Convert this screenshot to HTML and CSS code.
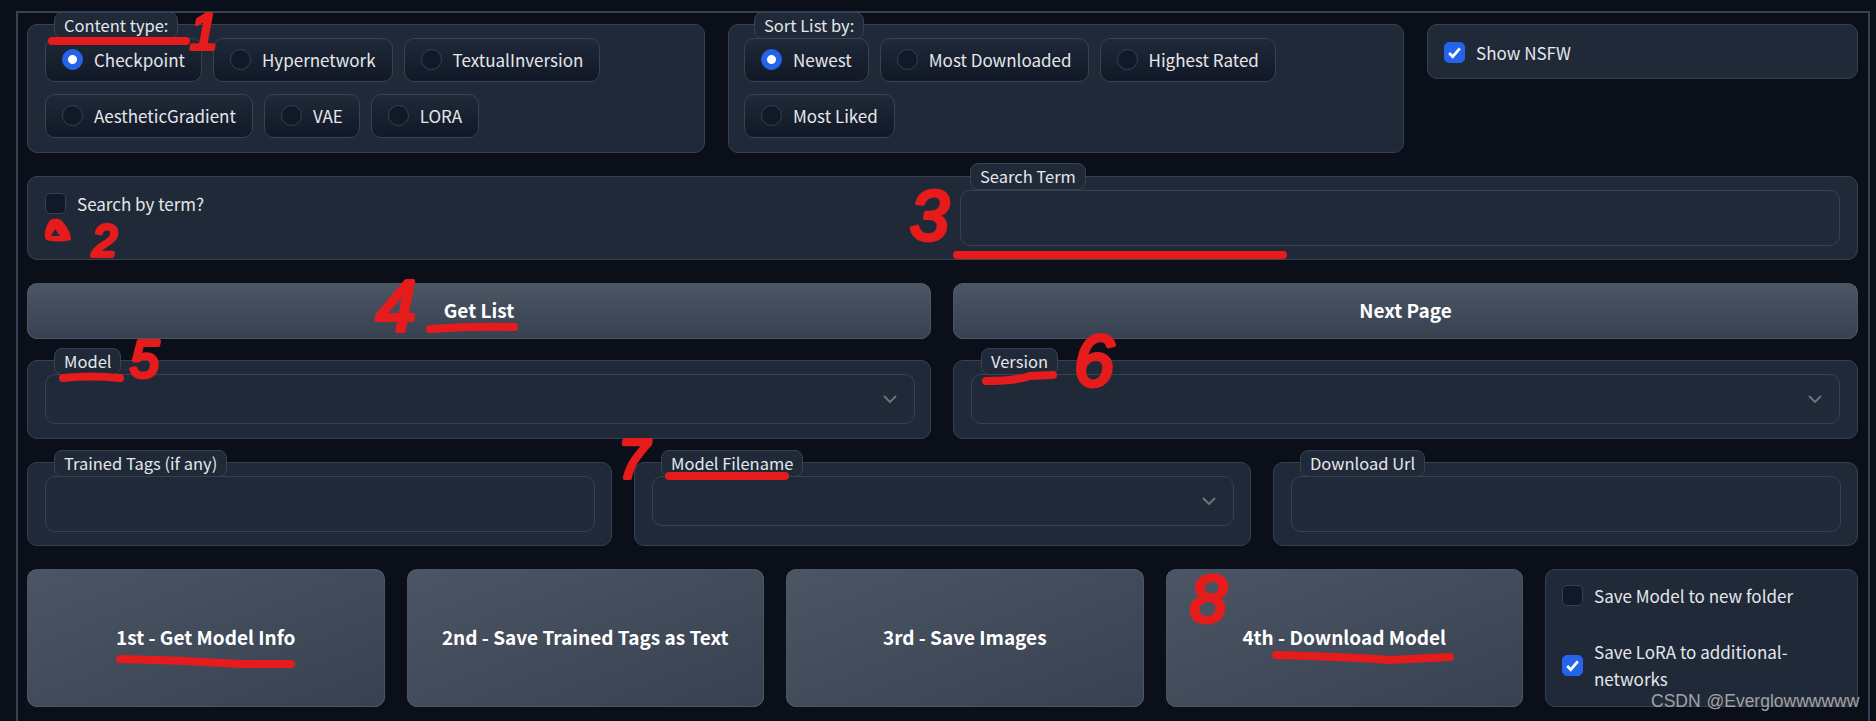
FILE: index.html
```html
<!DOCTYPE html>
<html lang="en">
<head>
  <meta charset="UTF-8" />
  <title>Civitai Helper</title>
  <link rel="stylesheet" href="styles.css">
</head>
<body>
  <div class="tab-box">

    <div class="row row-filters">
      <div class="panel">
        <span class="label label-content">Content type:</span>
        <div class="chips">
          <label class="chip"><span class="radio checked"></span>Checkpoint</label>
          <label class="chip"><span class="radio"></span>Hypernetwork</label>
          <label class="chip"><span class="radio"></span>TextualInversion</label>
          <label class="chip"><span class="radio"></span>AestheticGradient</label>
          <label class="chip"><span class="radio"></span>VAE</label>
          <label class="chip"><span class="radio"></span>LORA</label>
        </div>
      </div>
      <div class="panel panel-sort">
        <span class="label label-sort">Sort List by:</span>
        <div class="chips">
          <label class="chip"><span class="radio checked"></span>Newest</label>
          <label class="chip"><span class="radio"></span>Most Downloaded</label>
          <label class="chip"><span class="radio"></span>Highest Rated</label>
          <label class="chip"><span class="radio"></span>Most Liked</label>
        </div>
      </div>
      <div class="panel panel-nsfw">
        <label class="check-row">
          <span class="check checked"><svg viewBox="0 0 16 16"><path d="M3.5 8.5l3 3 6-7" /></svg></span>
          Show NSFW
        </label>
      </div>
    </div>

    <div class="row">
      <div class="panel panel-search">
        <label class="check-row check-search"><span class="check"></span>Search by term?</label>
        <div class="field-search">
          <span class="label label-term">Search Term</span>
          <input class="field field-tall" type="text" />
        </div>
      </div>
    </div>

    <div class="row row-half">
      <button class="btn">Get List</button>
      <button class="btn">Next Page</button>
    </div>

    <div class="row row-half row-model">
      <div class="panel panel-field">
        <span class="label label-model">Model</span>
        <div class="select">
          <svg class="chevron" viewBox="0 0 14 8"><path d="M1 1l6 6 6-6" /></svg>
        </div>
      </div>
      <div class="panel panel-field">
        <span class="label label-version">Version</span>
        <div class="select">
          <svg class="chevron" viewBox="0 0 14 8"><path d="M1 1l6 6 6-6" /></svg>
        </div>
      </div>
    </div>

    <div class="row row-thirds">
      <div class="panel panel-field">
        <span class="label label-tags">Trained Tags (if any)</span>
        <input class="field field-tall" type="text" />
      </div>
      <div class="panel panel-field">
        <span class="label label-filename">Model Filename</span>
        <div class="select">
          <svg class="chevron" viewBox="0 0 14 8"><path d="M1 1l6 6 6-6" /></svg>
        </div>
      </div>
      <div class="panel panel-field">
        <span class="label label-url">Download Url</span>
        <input class="field field-tall" type="text" />
      </div>
    </div>

    <div class="row row-actions">
      <button class="btn btn-diag">1st - Get Model Info</button>
      <button class="btn btn-diag">2nd - Save Trained Tags as Text</button>
      <button class="btn btn-diag">3rd - Save Images</button>
      <button class="btn btn-diag">4th - Download Model</button>
      <div class="panel panel-save">
        <label class="check-row"><span class="check"></span>Save Model to new folder</label>
        <label class="check-row">
          <span class="check checked"><svg viewBox="0 0 16 16"><path d="M3.5 8.5l3 3 6-7" /></svg></span>
          <span>Save LoRA to additional-<br>networks</span>
        </label>
      </div>
    </div>
  </div>

  <!-- red marker notes drawn on top of the screenshot -->
  <svg class="notes" viewBox="0 0 1876 721">
    <path class="stroke" d="M52 41H186" />
    <path class="stroke" d="M957 255H1283" />
    <path class="stroke" d="M430 329Q470 326 514 327" />
    <path class="stroke" d="M63 378Q90 375 120 378" />
    <path class="stroke" d="M986 381Q1015 381 1030 376L1053 375" />
    <path class="stroke" d="M669 476H785" />
    <path class="stroke" d="M120 659Q180 660 240 664L291 664" />
    <path class="stroke" d="M1276 655Q1350 657 1390 660L1450 657" />
    <path class="blob" d="M50 220Q58 216 63 222Q71 232 71 240Q58 243 46 240Q42 232 50 220ZM55 229L51 236H60Z" />
    <text class="digit d1" x="190" y="49">1</text>
    <text class="digit d2" x="92" y="256">2</text>
    <text class="digit d3" x="910" y="240">3</text>
    <text class="digit d4" x="376" y="331">4</text>
    <text class="digit d5" x="130" y="377">5</text>
    <text class="digit d6" x="1074" y="386">6</text>
    <text class="digit d7" x="618" y="478">7</text>
    <text class="digit d8" x="1190" y="622">8</text>
  </svg>

  <span class="watermark">CSDN @Everglowwwwww</span>
</body>
</html>
```

FILE: styles.css
```css
:root {
  --bg: #0b0f19;
  --panel: #1f2937;
  --line: #374151;
  --dark: #111827;
  --blue: #2563eb;
  --text: #e5e7eb;
  --red: #e61c1c;
}

* {
  box-sizing: border-box;
  margin: 0;
  padding: 0;
}

html, body {
  height: 721px;
  overflow: hidden;
}

body {
  position: relative;
  background-color: var(--bg);
  color: var(--text);
  font-family: "Noto Sans CJK SC", "Noto Sans", sans-serif;
  font-size: 17px;
  line-height: 27px;
}

.tab-box {
  margin: 11px 6px 0 16px;
  height: 710px;
  padding: 11px 10px 0 9px;
  border: 2px solid var(--line);
  border-bottom: none;
  overflow: hidden;
}

.row {
  margin-top: 23px;
}

.row:first-child {
  margin-top: 0;
}

.row-filters {
  display: grid;
  grid-template-columns: 678px 676px 431px;
  column-gap: 23px;
  align-items: start;
}

.row-half {
  display: grid;
  grid-template-columns: 904px 905px;
  column-gap: 22px;
}

.row-model {
  margin-top: 21px;
}

.row-thirds {
  display: grid;
  grid-template-columns: 585px 617px 585px;
  column-gap: 22px;
}

.row-actions {
  display: grid;
  grid-template-columns: repeat(4, 357.5px) 313px;
  column-gap: 22px;
}

.panel {
  position: relative;
  padding: 13px 17px 14px;
  background-color: var(--panel);
  border: 1px solid var(--line);
  border-radius: 10px;
}

.panel-sort {
  padding-left: 15px;
}

.label {
  position: absolute;
  top: -13px;
  height: 27px;
  padding: 0 9px;
  background-color: var(--panel);
  border: 1px solid var(--line);
  border-radius: 8px;
  line-height: 24px;
  font-size: 16.5px;
  white-space: nowrap;
}

.label-content { left: 26px; }
.label-sort { left: 25px; }
.label-term { left: 10px; top: -27px; }
.label-model { left: 26px; }
.label-version { left: 27px; }
.label-tags { left: 26px; }
.label-filename { left: 26px; }
.label-url { left: 26px; }

.chips {
  display: flex;
  flex-wrap: wrap;
  gap: 12px 11px;
}

.chip {
  display: flex;
  align-items: center;
  gap: 11px;
  height: 44px;
  padding: 0 16px 2px;
  background-image: linear-gradient(to bottom, var(--panel), var(--dark));
  border: 1px solid var(--line);
  border-radius: 10px;
}

.radio {
  width: 21px;
  height: 21px;
  flex-shrink: 0;
  background-color: var(--dark);
  border: 1px solid var(--line);
  border-radius: 50%;
}

.radio.checked {
  background-color: var(--blue);
  border-color: var(--blue);
  background-image: radial-gradient(circle, #fff 0, #fff 4px, transparent 5px);
}

.panel-nsfw {
  height: 55px;
  padding: 14px 16px 0;
}

.check-row {
  display: flex;
  align-items: center;
  gap: 11px;
}

.check {
  display: block;
  width: 21px;
  height: 21px;
  flex-shrink: 0;
  background-color: var(--dark);
  border: 1px solid var(--line);
  border-radius: 5px;
}

.check.checked {
  background-color: var(--blue);
  border-color: var(--blue);
}

.check svg {
  display: block;
  width: 100%;
  height: 100%;
  fill: none;
  stroke: #fff;
  stroke-width: 2.4;
}

.panel-search {
  display: flex;
  justify-content: space-between;
  align-items: flex-start;
  height: 84px;
}

.field-search {
  position: relative;
  width: 880px;
}

.field {
  display: block;
  width: 100%;
  background-color: var(--panel);
  border: 1px solid var(--line);
  border-radius: 10px;
  outline: none;
}

.field-tall {
  height: 56px;
}

.select {
  position: relative;
  height: 50px;
  border: 1px solid var(--line);
  border-radius: 10px;
}

.chevron {
  position: absolute;
  top: 20px;
  right: 17px;
  width: 14px;
  height: 8px;
  fill: none;
  stroke: #6b7280;
  stroke-width: 2;
}

.panel-field {
  height: 79px;
}

.row-half .panel-field:first-child {
  padding-right: 15px;
}

.row-thirds .panel-field {
  height: 84px;
  padding-right: 16px;
}

.btn {
  height: 56px;
  padding-bottom: 3px;
  background-image: linear-gradient(to bottom, #4b5563, #374151);
  border: 1px solid #4b5563;
  border-radius: 10px;
  color: #fff;
  font-family: inherit;
  font-size: 19px;
  font-weight: 700;
}

.btn-diag {
  height: 138px;
  background-image: linear-gradient(to bottom right, #4b5563, #374151);
}

.panel-save {
  display: flex;
  flex-direction: column;
  gap: 29px;
  height: 138px;
  padding: 12px 16px 0;
  overflow: hidden;
}

.notes {
  position: absolute;
  left: 0;
  top: 0;
  width: 1876px;
  height: 721px;
  pointer-events: none;
}

.stroke {
  fill: none;
  stroke: var(--red);
  stroke-width: 8;
  stroke-linecap: round;
}

.blob {
  fill: var(--red);
  fill-rule: evenodd;
}

.digit {
  fill: var(--red);
  stroke: var(--red);
  stroke-width: 4;
  stroke-linejoin: round;
  font-family: "Liberation Sans", sans-serif;
  font-style: italic;
}

.d1 { font-size: 50px; }
.d2 { font-size: 44px; }
.d3 { font-size: 70px; }
.d4 { font-size: 72px; }
.d5 { font-size: 52px; }
.d6 { font-size: 72px; }
.d7 { font-size: 56px; }
.d8 { font-size: 66px; }

.watermark {
  position: absolute;
  left: 1651px;
  top: 689px;
  color: #a3a3a3;
  font-family: "Liberation Sans", sans-serif;
  font-size: 17.5px;
  word-spacing: 1px;
  line-height: 24px;
  white-space: nowrap;
}
```
